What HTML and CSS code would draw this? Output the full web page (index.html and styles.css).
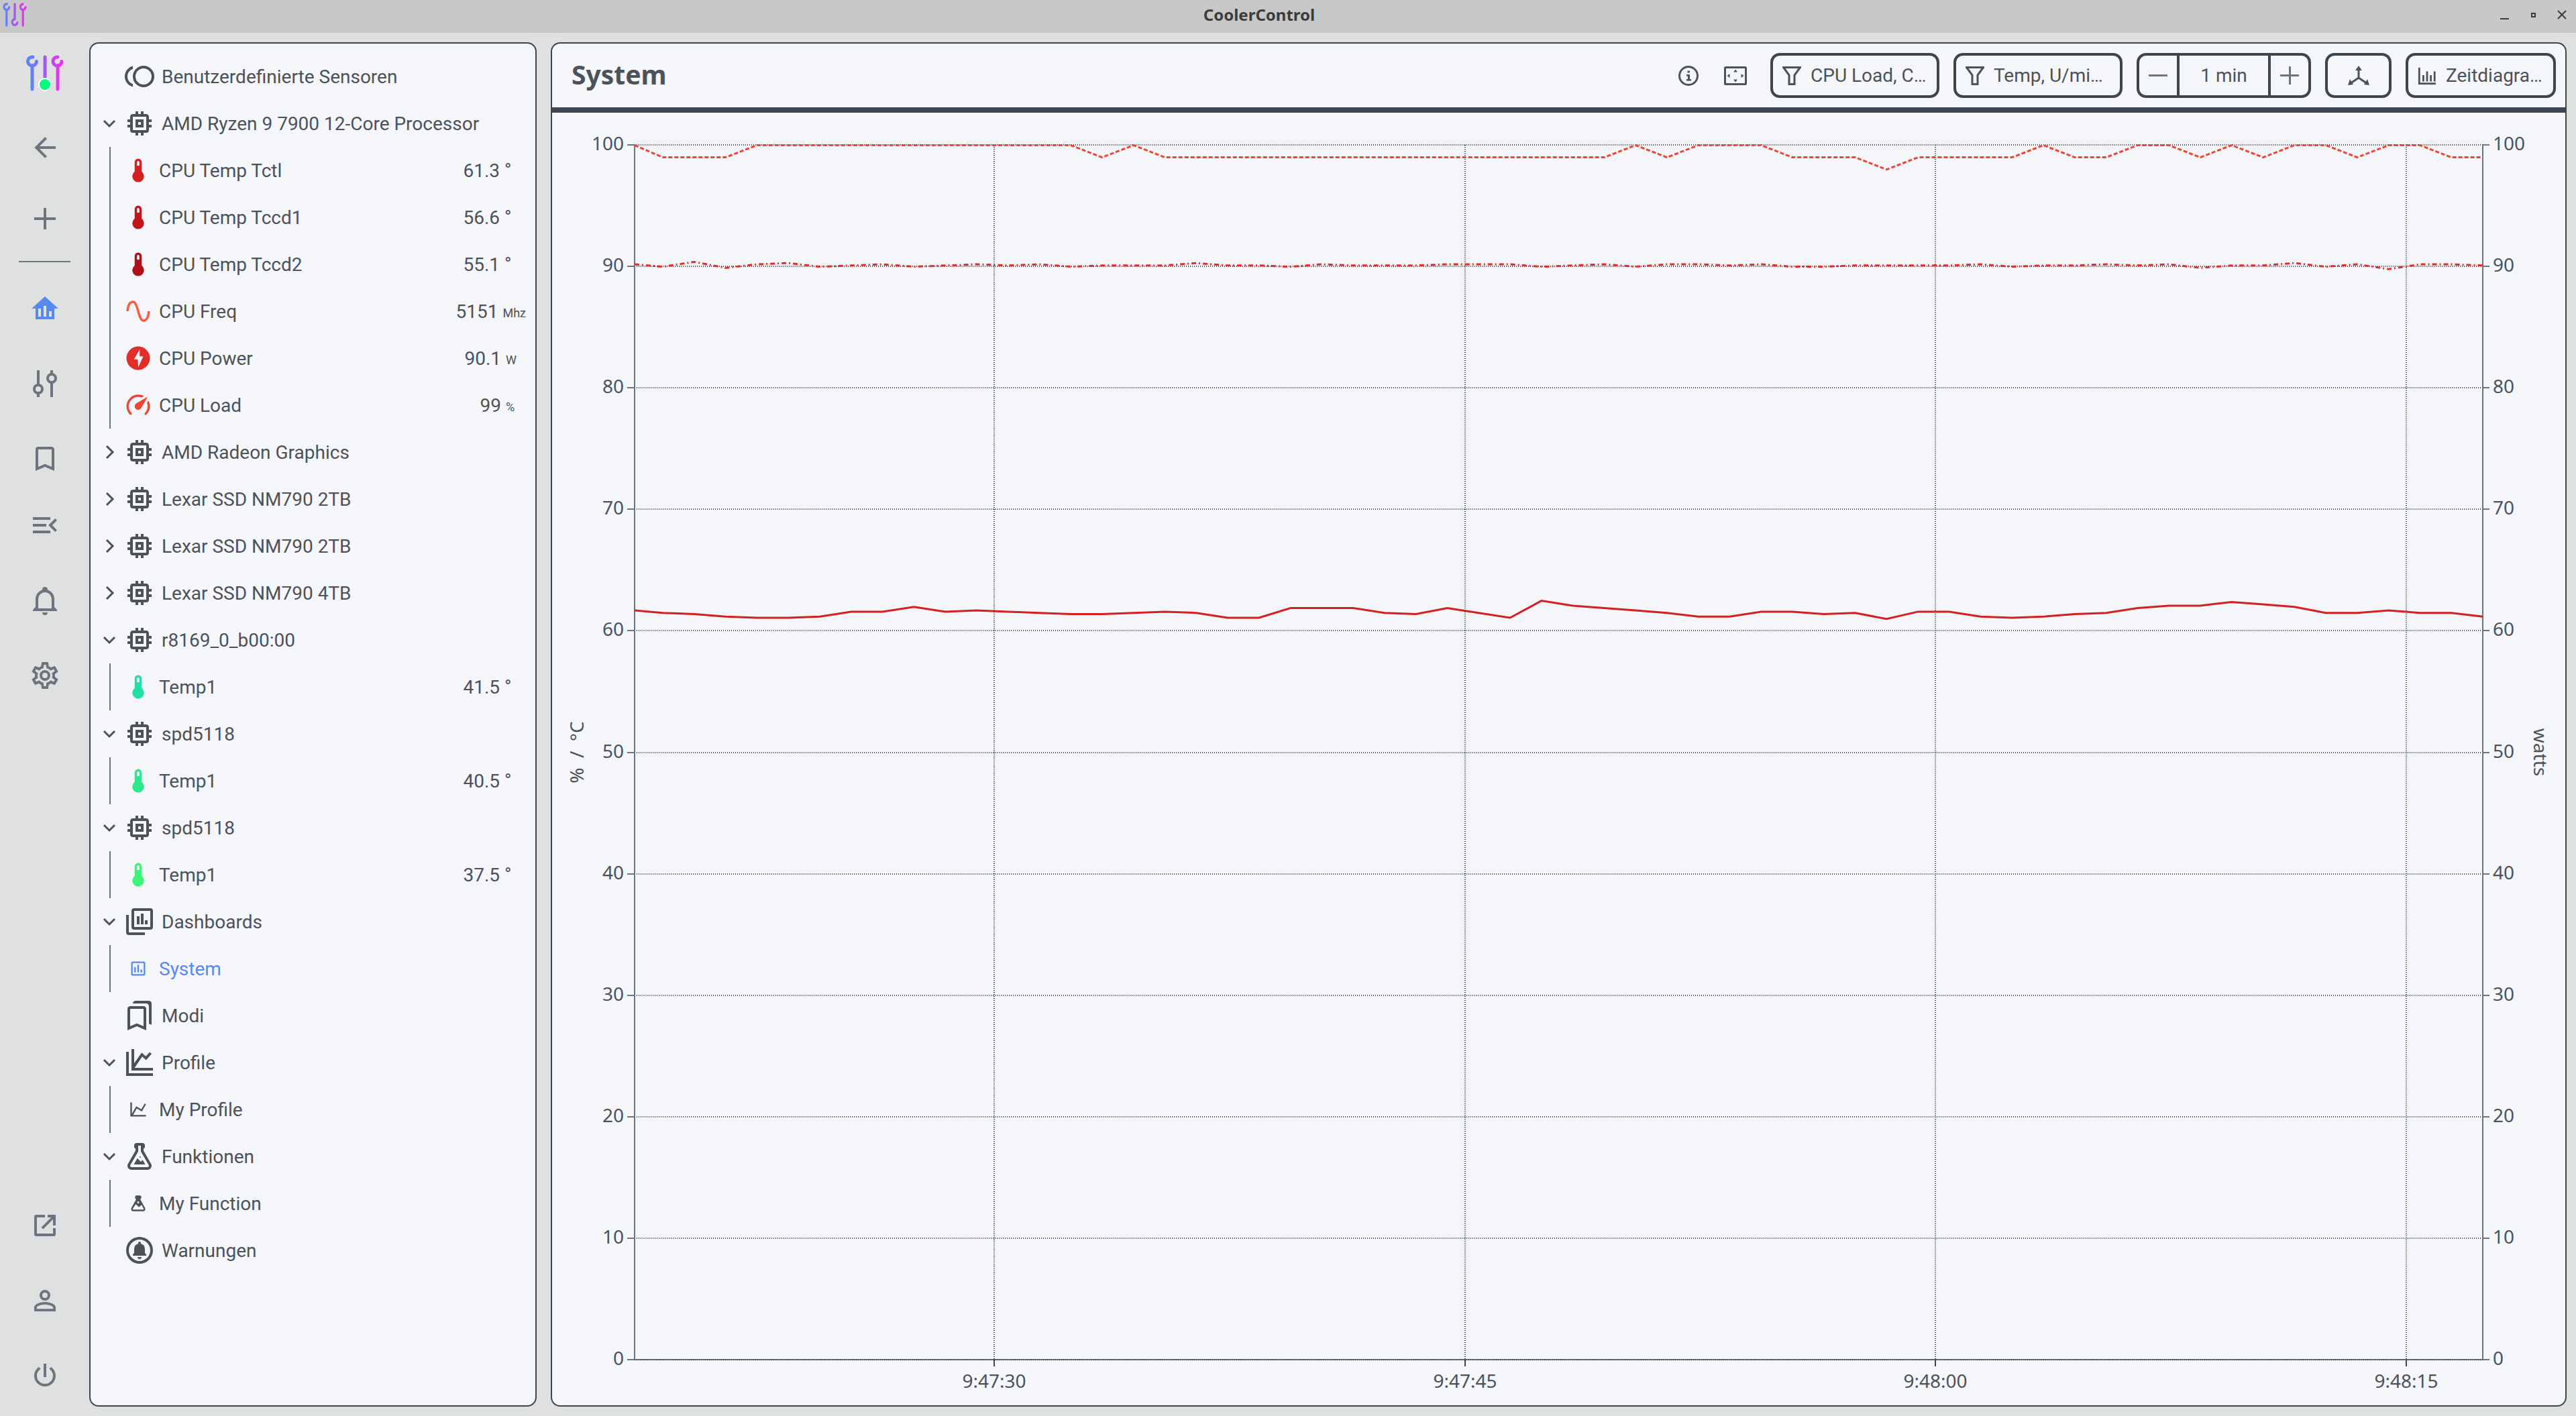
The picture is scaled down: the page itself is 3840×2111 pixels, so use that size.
FILE: index.html
```html
<!DOCTYPE html>
<html lang="de">
<head>
  <meta charset="UTF-8" />
  <meta name="viewport" content="width=device-width, initial-scale=1.0"/>
  <title>CoolerControl</title>
  <link rel="stylesheet" href="styles.css">
</head>
<body>

<!-- Icon set -->
<svg class="icon-defs" aria-hidden="true">
  <defs>
    <linearGradient id="brand" gradientUnits="userSpaceOnUse" x1="0" y1="0" x2="56" y2="0">
      <stop offset="0" stop-color="#568af2"/>
      <stop offset="0.25" stop-color="#6e78ff"/>
      <stop offset="0.5" stop-color="#a557f5"/>
      <stop offset="1" stop-color="#fb28f4"/>
    </linearGradient>
  </defs>
  <symbol id="i-sensors" viewBox="0 0 24 24"><path d="M15,4A8,8 0 0,1 23,12A8,8 0 0,1 15,20A8,8 0 0,1 7,12A8,8 0 0,1 15,4M15,18A6,6 0 0,0 21,12A6,6 0 0,0 15,6A6,6 0 0,0 9,12A6,6 0 0,0 15,18M3,12C3,14.61 4.67,16.83 7,17.65V19.74C3.55,18.85 1,15.73 1,12C1,8.27 3.55,5.15 7,4.26V6.35C4.67,7.17 3,9.39 3,12Z"/></symbol>
  <symbol id="i-chip" viewBox="0 0 24 24"><path d="M17,17H7V7H17M21,11V9H19V7C19,5.89 18.1,5 17,5H15V3H13V5H11V3H9V5H7C5.89,5 5,5.89 5,7V9H3V11H5V13H3V15H5V17A2,2 0 0,0 7,19H9V21H11V19H13V21H15V19H17A2,2 0 0,0 19,17V15H21V13H19V11M13,13H11V11H13M15,9H9V15H15V9Z"/></symbol>
  <symbol id="i-temp" viewBox="0 0 24 24"><path d="M15 13V5A3 3 0 0 0 9 5V13A5 5 0 1 0 15 13M12 4A1 1 0 0 1 13 5V8H11V5A1 1 0 0 1 12 4Z"/></symbol>
  <symbol id="i-freq" viewBox="0 0 24 24"><path d="M16.5,21C13.5,21 12.31,16.76 11.05,12.28C10.14,9.04 9,5 7.5,5C4.11,5 4,11.93 4,12H2C2,11.63 2.06,3 7.5,3C10.5,3 11.71,7.25 12.97,11.74C13.83,14.8 15,19 16.5,19C19.94,19 20.03,12.07 20.03,12H22.03C22.03,12.37 21.97,21 16.5,21Z"/></symbol>
  <symbol id="i-power" viewBox="0 0 24 24"><path fill-rule="evenodd" d="M12 2A10 10 0 0 0 2 12A10 10 0 0 0 12 22A10 10 0 0 0 22 12A10 10 0 0 0 12 2M13.3 4.5L8.4 13H11.6L12.1 19.6L16.3 10.4H13.2Z"/></symbol>
  <symbol id="i-load" viewBox="0 0 24 24"><path d="M12,16A3,3 0 0,1 9,13C9,11.88 9.61,10.9 10.5,10.39L20.21,4.77L14.68,14.35C14.18,15.33 13.17,16 12,16M12,3C13.81,3 15.5,3.5 16.97,4.32L14.87,5.53C14,5.19 13,5 12,5A8,8 0 0,0 4,13C4,15.21 4.89,17.21 6.34,18.65H6.35C6.74,19.04 6.74,19.67 6.35,20.06C5.96,20.45 5.32,20.45 4.93,20.07V20.07C3.12,18.26 2,15.76 2,13A10,10 0 0,1 12,3M22,13C22,15.76 20.88,18.26 19.07,20.07V20.07C18.68,20.45 18.05,20.45 17.66,20.06C17.27,19.67 17.27,19.04 17.66,18.65V18.65C19.11,17.2 20,15.21 20,13C20,12 19.81,11 19.46,10.1L20.67,8C21.5,9.5 22,11.18 22,13Z"/></symbol>
  <symbol id="i-dashboards" viewBox="0 0 24 24"><path d="M20,2H8A2,2 0 0,0 6,4V16A2,2 0 0,0 8,18H20A2,2 0 0,0 22,16V4A2,2 0 0,0 20,2M20,16H8V4H20V16M4,7H2V20A2,2 0 0,0 4,22H16V20H4V7M10,8H12V14H10V8M13,6H15V14H13V6M16,11H18V14H16V11Z"/></symbol>
  <symbol id="i-dashboard" viewBox="0 0 24 24"><path d="M9 17H7V10H9V17M13 17H11V7H13V17M17 17H15V13H17V17M19 19H5V5H19V19.1M19 3H5C3.9 3 3 3.9 3 5V19C3 20.1 3.9 21 5 21H19C20.1 21 21 20.1 21 19V5C21 3.9 20.1 3 19 3Z"/></symbol>
  <symbol id="i-modes" viewBox="0 0 24 24"><path d="M15 7V19.97l-4-1.71-1-.43-1 .43-4 1.71V7h10m4-6H8.99C7.89 1 7 1.9 7 3h10c1.1 0 2 .9 2 2v13l2 1V3c0-1.1-.9-2-2-2m-4 4H5c-1.1 0-2 .9-2 2v16l7-3 7 3V7c0-1.1-.9-2-2-2z"/></symbol>
  <symbol id="i-profiles" viewBox="0 0 24 24"><path d="M2,4H4V20H22V22H2V4M6,2H8V12.6L13.6,4.6L16.7,7.4L19.6,4.2L21,5.5L16.9,10.3L14,7.6L8.3,16H22V18H6V2Z"/></symbol>
  <symbol id="i-profile" viewBox="0 0 24 24"><path d="M16,11.78L20.24,4.45L21.97,5.45L16.74,14.5L10.23,10.75L5.46,19H22V21H2V3H4V17.54L9.5,8L16,11.78Z"/></symbol>
  <symbol id="i-functions" viewBox="0 0 24 24"><path d="M5,19A1,1 0 0,0 6,20H18A1,1 0 0,0 19,19C19,18.79 18.93,18.59 18.82,18.43L13,8.35V4H11V8.35L5.18,18.43C5.07,18.59 5,18.79 5,19M6,22A3,3 0 0,1 3,19C3,18.4 3.18,17.84 3.5,17.37L9,7.81V6A1,1 0 0,1 8,5V4A2,2 0 0,1 10,2H14A2,2 0 0,1 16,4V5A1,1 0 0,1 15,6V7.81L20.5,17.37C20.82,17.84 21,18.4 21,19A3,3 0 0,1 18,22H6M13,16L14.34,14.66L16.27,18H7.73L10.39,13.39L13,16M12.5,12A0.5,0.5 0 0,1 13,12.5A0.5,0.5 0 0,1 12.5,13A0.5,0.5 0 0,1 12,12.5A0.5,0.5 0 0,1 12.5,12Z"/></symbol>
  <symbol id="i-function" viewBox="0 0 24 24"><path fill-rule="evenodd" d="M6,22A3,3 0 0,1 3,19C3,18.4 3.18,17.84 3.5,17.37L9,7.81V6A1,1 0 0,1 8,5V4A2,2 0 0,1 10,2H14A2,2 0 0,1 16,4V5A1,1 0 0,1 15,6V7.81L20.5,17.37C20.82,17.84 21,18.4 21,19A3,3 0 0,1 18,22H6M5,19A1,1 0 0,0 6,20H18A1,1 0 0,0 19,19L18.8,18.4L16.3,14L13,17L9,13L5.2,18.4ZM12,9.5A1.3,1.3 0 0,0 12,12.1A1.3,1.3 0 0,0 12,9.5Z"/></symbol>
  <symbol id="i-alerts" viewBox="0 0 24 24"><path d="M12,2A10,10 0 0,0 2,12A10,10 0 0,0 12,22A10,10 0 0,0 22,12A10,10 0 0,0 12,2M12,20A8,8 0 1,1 20,12A8,8 0 0,1 12,20M12,18.5A1.5,1.5 0 0,0 13.5,17H10.5A1.5,1.5 0 0,0 12,18.5M16,14V11A4,4 0 0,0 13,7.1V6.5A1,1 0 0,0 11,6.5V7.1A4,4 0 0,0 8,11V14L7,15V16H17V15Z"/></symbol>
  <symbol id="i-down" viewBox="0 0 24 24"><path class="line" d="M4 8L12 16L20 8"/></symbol>
  <symbol id="i-right" viewBox="0 0 24 24"><path class="line" d="M8 3L17 12L8 21"/></symbol>
  <symbol id="i-back" viewBox="0 0 24 24"><path d="M20,11V13H8L13.5,18.5L12.08,19.92L4.16,12L12.08,4.08L13.5,5.5L8,11H20Z"/></symbol>
  <symbol id="i-plus" viewBox="0 0 24 24"><path d="M20,13H13V20H11V13H4V11H11V4H13V11H20V13Z"/></symbol>
  <symbol id="i-home" viewBox="0 0 24 24"><path d="M12,3L2,12H5V20H19V12H22L12,3M9,18H7V12H9V18M13,18H11V10H13V18M17,18H15V14H17V18Z"/></symbol>
  <symbol id="i-controls" viewBox="0 0 24 24"><g class="line2"><circle cx="7" cy="16" r="3"/><path d="M7 2V13M7 19V22M17 2V5M17 11V22"/><circle cx="17" cy="8" r="3"/></g></symbol>
  <symbol id="i-bookmark" viewBox="0 0 24 24"><path d="M17,18L12,15.82L7,18V5H17M17,3H7A2,2 0 0,0 5,5V21L12,18L19,21V5C19,3.89 18.1,3 17,3Z"/></symbol>
  <symbol id="i-collapse" viewBox="0 0 24 24"><path d="M21,15.61L19.59,17L14.58,12L19.59,7L21,8.39L17.44,12L21,15.61M3,6H16V8H3V6M3,13V11H13V13H3M3,18V16H16V18H3Z"/></symbol>
  <symbol id="i-bell" viewBox="0 0 24 24"><path d="M10,21H14A2,2 0 0,1 12,23A2,2 0 0,1 10,21M21,19V20H3V19L5,17V11C5,7.9 7.03,5.17 10,4.29C10,4.19 10,4.1 10,4A2,2 0 0,1 12,2A2,2 0 0,1 14,4C14,4.1 14,4.19 14,4.29C16.97,5.17 19,7.9 19,11V17L21,19M17,11A5,5 0 0,0 12,6A5,5 0 0,0 7,11V18H17V11Z"/></symbol>
  <symbol id="i-gear" viewBox="0 0 24 24"><path d="M12,8A4,4 0 0,1 16,12A4,4 0 0,1 12,16A4,4 0 0,1 8,12A4,4 0 0,1 12,8M12,10A2,2 0 0,0 10,12A2,2 0 0,0 12,14A2,2 0 0,0 14,12A2,2 0 0,0 12,10M10,22C9.75,22 9.54,21.82 9.5,21.58L9.13,18.93C8.5,18.68 7.96,18.34 7.44,17.94L4.95,18.95C4.73,19.03 4.46,18.95 4.34,18.73L2.34,15.27C2.21,15.05 2.27,14.78 2.46,14.63L4.57,12.97L4.5,12L4.57,11L2.46,9.37C2.27,9.22 2.21,8.95 2.34,8.73L4.34,5.27C4.46,5.05 4.73,4.96 4.95,5.05L7.44,6.05C7.96,5.66 8.5,5.32 9.13,5.07L9.5,2.42C9.54,2.18 9.75,2 10,2H14C14.25,2 14.46,2.18 14.5,2.42L14.87,5.07C15.5,5.32 16.04,5.66 16.56,6.05L19.05,5.05C19.27,4.96 19.54,5.05 19.66,5.27L21.66,8.73C21.79,8.95 21.73,9.22 21.54,9.37L19.43,11L19.5,12L19.43,13L21.54,14.63C21.73,14.78 21.79,15.05 21.66,15.27L19.66,18.73C19.54,18.95 19.27,19.04 19.05,18.95L16.56,17.95C16.04,18.34 15.5,18.68 14.87,18.93L14.5,21.58C14.46,21.82 14.25,22 14,22H10M11.25,4L10.88,6.61C9.68,6.86 8.62,7.5 7.85,8.39L5.44,7.35L4.69,8.65L6.8,10.2C6.4,11.37 6.4,12.64 6.8,13.8L4.68,15.36L5.43,16.66L7.86,15.62C8.63,16.5 9.68,17.14 10.87,17.38L11.24,20H12.76L13.13,17.39C14.32,17.14 15.37,16.5 16.14,15.62L18.57,16.66L19.32,15.36L17.2,13.81C17.6,12.64 17.6,11.37 17.2,10.2L19.31,8.65L18.56,7.35L16.15,8.39C15.38,7.5 14.32,6.86 13.12,6.62L12.75,4H11.25Z"/></symbol>
  <symbol id="i-external" viewBox="0 0 24 24"><path d="M12,4V6H6V18H18V14H20V18.5A1.5,1.5 0 0,1 18.5,20H5.5A1.5,1.5 0 0,1 4,18.5V5.5A1.5,1.5 0 0,1 5.5,4H12M14,4H20V12H18V7.4L10.7,14.8L9.3,13.4L16.6,6H14V4Z"/></symbol>
  <symbol id="i-person" viewBox="0 0 24 24"><path d="M12,4A4,4 0 0,1 16,8A4,4 0 0,1 12,12A4,4 0 0,1 8,8A4,4 0 0,1 12,4M12,6A2,2 0 0,0 10,8A2,2 0 0,0 12,10A2,2 0 0,0 14,8A2,2 0 0,0 12,6M12,13C14.67,13 20,14.33 20,17V20H4V17C4,14.33 9.33,13 12,13M12,14.9C9.03,14.9 5.9,16.36 5.9,17V18.1H18.1V17C18.1,16.36 14.97,14.9 12,14.9Z"/></symbol>
  <symbol id="i-shutdown" viewBox="0 0 24 24"><path d="M16.56,5.44L15.11,6.89C16.84,7.94 18,9.83 18,12A6,6 0 0,1 12,18A6,6 0 0,1 6,12C6,9.83 7.16,7.94 8.88,6.88L7.44,5.44C5.36,6.88 4,9.28 4,12A8,8 0 0,0 12,20A8,8 0 0,0 20,12C20,9.28 18.64,6.88 16.56,5.44M13,3H11V13H13"/></symbol>
  <symbol id="i-info" viewBox="0 0 32 32"><circle class="thin" cx="16" cy="16" r="13.5"/><path d="M14.5 8.5h3.4v3h-3.4zM13 14h5v7h2v2.6h-7V21h2v-4.4h-2z"/></symbol>
  <symbol id="i-expand" viewBox="0 0 36 32"><rect class="thin" x="2.5" y="3.5" width="31" height="25" rx="1"/><path d="M18 6.500l3 4h-6zM18 25.500l3-4h-6zM5.500 16l4-3v6zM30.500 16l-4-3v6z"/></symbol>
  <symbol id="i-filter" viewBox="0 0 28 30"><path class="thin" d="M1.500 2.500h25L18 14v13.500h-8V14z"/></symbol>
  <symbol id="i-axes" viewBox="0 0 36 32"><path class="thin" d="M18 6v13M18 19L6 27M18 19L30 27"/><path d="M18 1l5 7H13zM2 30l3-9 5 8zM34 30l-3-9-5 8z"/></symbol>
  <symbol id="i-chart" viewBox="0 0 30 30"><path class="thin" d="M2.500 2v25.500H29M9 14v10M15 8v16M21 14v10M27 8v16"/></symbol>
</svg>

<header class="titlebar">
  <svg class="titlebar-logo" viewBox="0 0 56 54" preserveAspectRatio="none" aria-hidden="true">
    <g fill="none" stroke="url(#brand)" stroke-width="5" stroke-linecap="round">
      <path d="M10 3A6 6.500 0 1 0 15 10M9 16V51M47 3A6 6.500 0 1 0 53 10M47 16V51M28.100 3L28 37M28 37A6 6.500 0 1 0 34 44"/>
    </g>
  </svg>
  <h1 class="titlebar-title">CoolerControl</h1>
  <div class="window-controls">
    <button type="button" aria-label="Minimieren"><svg viewBox="0 0 14 14"><path d="M1 12h13v2H1z"/></svg></button>
    <button type="button" aria-label="Maximieren"><svg viewBox="0 0 14 14"><path fill-rule="evenodd" d="M4 4h7v7H4zM6 6v3h3V6z"/></svg></button>
    <button type="button" aria-label="Schließen"><svg viewBox="0 0 14 14"><path class="cross" d="M1 1l12 12M13 1L1 13"/></svg></button>
  </div>
</header>

<div class="workspace">

  <nav class="rail">
    <a href="#" class="rail-logo" aria-label="CoolerControl">
      <svg viewBox="0 0 56 54" aria-hidden="true">
        <g fill="none" stroke="url(#brand)" stroke-width="5" stroke-linecap="round">
          <path d="M10 3A6.500 6.500 0 1 0 15.500 9.500M9 16V51M47 3A6.500 6.500 0 1 0 53 9.500M47.100 16L47 51M28.100 3L28 36"/>
        </g>
        <circle cx="28" cy="44" r="9" fill="#00ff7f" stroke="#fff" stroke-width="2"/>
      </svg>
    </a>
    <div class="rail-group rail-history">
      <button type="button" aria-label="Zurück"><svg><use href="#i-back"/></svg></button>
      <button type="button" aria-label="Hinzufügen"><svg><use href="#i-plus"/></svg></button>
    </div>
    <hr>
    <div class="rail-group">
      <a href="#" class="active" aria-label="Dashboard"><svg><use href="#i-home"/></svg></a>
      <a href="#" aria-label="Steuerung"><svg><use href="#i-controls"/></svg></a>
      <a href="#" aria-label="Modi"><svg><use href="#i-bookmark"/></svg></a>
    </div>
    <div class="rail-group rail-tools">
      <button type="button" aria-label="Menü einklappen"><svg><use href="#i-collapse"/></svg></button>
      <button type="button" aria-label="Warnungen"><svg><use href="#i-bell"/></svg></button>
      <button type="button" aria-label="Einstellungen"><svg><use href="#i-gear"/></svg></button>
    </div>
    <div class="rail-group rail-bottom">
      <a href="#" aria-label="Im Browser öffnen"><svg><use href="#i-external"/></svg></a>
      <button type="button" aria-label="Anmeldung"><svg><use href="#i-person"/></svg></button>
      <button type="button" aria-label="Beenden"><svg><use href="#i-shutdown"/></svg></button>
    </div>
  </nav>

  <aside class="panel tree">
    <a href="#" class="node"><span class="chevron"></span><svg><use href="#i-sensors"/></svg>Benutzerdefinierte Sensoren</a>

    <button type="button" class="node"><svg class="chevron"><use href="#i-down"/></svg><svg><use href="#i-chip"/></svg>AMD Ryzen 9 7900 12-Core Processor</button>
    <div class="children">
      <a href="#" class="leaf"><svg class="tctl"><use href="#i-temp"/></svg><span class="name">CPU Temp Tctl</span><span class="value">61.3</span><span class="unit deg">°</span></a>
      <a href="#" class="leaf"><svg class="tccd1"><use href="#i-temp"/></svg><span class="name">CPU Temp Tccd1</span><span class="value">56.6</span><span class="unit deg">°</span></a>
      <a href="#" class="leaf"><svg class="tccd2"><use href="#i-temp"/></svg><span class="name">CPU Temp Tccd2</span><span class="value">55.1</span><span class="unit deg">°</span></a>
      <a href="#" class="leaf"><svg class="freq"><use href="#i-freq"/></svg><span class="name">CPU Freq</span><span class="value">5151</span><span class="unit">Mhz</span></a>
      <a href="#" class="leaf"><svg class="power"><use href="#i-power"/></svg><span class="name">CPU Power</span><span class="value">90.1</span><span class="unit">W</span></a>
      <a href="#" class="leaf"><svg class="load"><use href="#i-load"/></svg><span class="name">CPU Load</span><span class="value">99</span><span class="unit">%</span></a>
    </div>

    <button type="button" class="node"><svg class="chevron"><use href="#i-right"/></svg><svg><use href="#i-chip"/></svg>AMD Radeon Graphics</button>
    <button type="button" class="node"><svg class="chevron"><use href="#i-right"/></svg><svg><use href="#i-chip"/></svg>Lexar SSD NM790 2TB</button>
    <button type="button" class="node"><svg class="chevron"><use href="#i-right"/></svg><svg><use href="#i-chip"/></svg>Lexar SSD NM790 2TB</button>
    <button type="button" class="node"><svg class="chevron"><use href="#i-right"/></svg><svg><use href="#i-chip"/></svg>Lexar SSD NM790 4TB</button>

    <button type="button" class="node"><svg class="chevron"><use href="#i-down"/></svg><svg><use href="#i-chip"/></svg>r8169_0_b00:00</button>
    <div class="children">
      <a href="#" class="leaf"><svg class="nic"><use href="#i-temp"/></svg><span class="name">Temp1</span><span class="value">41.5</span><span class="unit deg">°</span></a>
    </div>

    <button type="button" class="node"><svg class="chevron"><use href="#i-down"/></svg><svg><use href="#i-chip"/></svg>spd5118</button>
    <div class="children">
      <a href="#" class="leaf"><svg class="ram1"><use href="#i-temp"/></svg><span class="name">Temp1</span><span class="value">40.5</span><span class="unit deg">°</span></a>
    </div>

    <button type="button" class="node"><svg class="chevron"><use href="#i-down"/></svg><svg><use href="#i-chip"/></svg>spd5118</button>
    <div class="children">
      <a href="#" class="leaf"><svg class="ram2"><use href="#i-temp"/></svg><span class="name">Temp1</span><span class="value">37.5</span><span class="unit deg">°</span></a>
    </div>

    <button type="button" class="node"><svg class="chevron"><use href="#i-down"/></svg><svg><use href="#i-dashboards"/></svg>Dashboards</button>
    <div class="children">
      <a href="#" class="leaf active"><svg class="small"><use href="#i-dashboard"/></svg><span class="name">System</span></a>
    </div>

    <a href="#" class="node"><span class="chevron"></span><svg><use href="#i-modes"/></svg>Modi</a>

    <button type="button" class="node"><svg class="chevron"><use href="#i-down"/></svg><svg><use href="#i-profiles"/></svg>Profile</button>
    <div class="children">
      <a href="#" class="leaf"><svg class="small"><use href="#i-profile"/></svg><span class="name">My Profile</span></a>
    </div>

    <button type="button" class="node"><svg class="chevron"><use href="#i-down"/></svg><svg><use href="#i-functions"/></svg>Funktionen</button>
    <div class="children">
      <a href="#" class="leaf"><svg class="small"><use href="#i-function"/></svg><span class="name">My Function</span></a>
    </div>

    <a href="#" class="node"><span class="chevron"></span><svg><use href="#i-alerts"/></svg>Warnungen</a>
  </aside>

  <main class="panel dashboard">
    <div class="toolbar">
      <h2>System</h2>
      <div class="toolbar-icons">
        <button type="button" aria-label="Info"><svg class="info"><use href="#i-info"/></svg></button>
        <button type="button" aria-label="Vollbild"><svg class="expand"><use href="#i-expand"/></svg></button>
      </div>
      <button type="button" class="btn filter-btn"><svg><use href="#i-filter"/></svg>CPU Load, C…</button>
      <button type="button" class="btn filter-btn"><svg><use href="#i-filter"/></svg>Temp, U/mi…</button>
      <div class="stepper">
        <button type="button" aria-label="Weniger"><svg viewBox="0 0 28 28"><path d="M0 12h28v3H0z"/></svg></button>
        <output>1 min</output>
        <button type="button" aria-label="Mehr"><svg viewBox="0 0 28 28"><path d="M0 12h13V0h3v12h12v3H16v12h-3V15H0z"/></svg></button>
      </div>
      <button type="button" class="btn axes-btn" aria-label="Achsen"><svg class="expand"><use href="#i-axes"/></svg></button>
      <button type="button" class="btn type-btn"><svg><use href="#i-chart"/></svg>Zeitdiagra…</button>
    </div>
    <div class="chart" id="chart"></div>
  </main>

</div>

<script>
  const chart = document.getElementById('chart');
  const margin = { top: 48, right: 123, bottom: 68, left: 123 };

  // one sample per second, the newest one sits on the right edge
  const temp = [61.7, 61.5, 61.4, 61.2, 61.1, 61.1, 61.2, 61.6, 61.6, 62, 61.6, 61.7, 61.6, 61.5, 61.4, 61.4, 61.5, 61.6, 61.5, 61.1,
    61.1, 61.9, 61.9, 61.9, 61.5, 61.4, 61.9, 61.5, 61.1, 62.5, 62.1, 61.9, 61.7, 61.5, 61.2, 61.2, 61.6, 61.6, 61.4, 61.5,
    61, 61.6, 61.6, 61.2, 61.1, 61.2, 61.4, 61.5, 61.9, 62.1, 62.1, 62.4, 62.2, 62, 61.5, 61.5, 61.7, 61.5, 61.5, 61.2];
  const load = [100, 99, 99, 99, 100, 100, 100, 100, 100, 100, 100, 100, 100, 100, 100, 99, 100, 99, 99, 99,
    99, 99, 99, 99, 99, 99, 99, 99, 99, 99, 99, 99, 100, 99, 100, 100, 100, 99, 99, 99,
    98, 99, 99, 99, 99, 100, 99, 99, 100, 100, 99, 100, 99, 100, 100, 99, 100, 100, 99, 99];
  const power = [90.2, 90, 90.4, 89.9, 90.2, 90.3, 90, 90.1, 90.2, 90, 90.1, 90.2, 90.1, 90.2, 90, 90.1, 90.1, 90.1, 90.3, 90.1,
    90.1, 90, 90.2, 90.1, 90.1, 90.1, 90.2, 90.2, 90.2, 90, 90.1, 90.2, 90, 90.2, 90.2, 90.1, 90.2, 90, 90, 90.1,
    90.1, 90.1, 90.1, 90.2, 90, 90.1, 90.1, 90.2, 90.1, 90.2, 89.9, 90.1, 90.1, 90.3, 90, 90.2, 89.8, 90.2, 90.2, 90.1];
  const seconds = 58.9;
  const times = [
    { label: '9:47:30', at: 11.46 },
    { label: '9:47:45', at: 26.46 },
    { label: '9:48:00', at: 41.46 },
    { label: '9:48:15', at: 56.46 }
  ];

  function draw() {
    const w = chart.clientWidth;
    const h = chart.clientHeight;
    const left = margin.left;
    const right = w - margin.right;
    const top = margin.top;
    const bottom = h - margin.bottom;
    const x = s => left + (right - left) * s / seconds;
    const y = v => bottom - (bottom - top) * v / 100;
    let out = '';

    for (let v = 0; v <= 100; v += 10) {
      const py = Math.round(y(v));
      out += `<path class="tick" d="M${left - 11} ${py}H${left}M${right} ${py}H${right + 10}"/>`;
      if (v === 0) out += `<path class="tick" d="M${left} ${py}H${right}"/>`;
      out += `<path class="grid" d="M${left} ${py}H${right}"/>`;
      out += `<text class="end" x="${left - 16}" y="${py + 8}">${v}</text>`;
      out += `<text x="${right + 15}" y="${py + 8}">${v}</text>`;
    }

    times.forEach(t => {
      const px = Math.round(x(t.at));
      out += `<path class="grid" d="M${px} ${top}V${bottom}"/>`;
      out += `<path class="tick dark" d="M${px} ${bottom}V${bottom + 10}"/>`;
      out += `<text class="middle" x="${px}" y="${bottom + 42}">${t.label}</text>`;
    });

    out += `<path class="tick" d="M${left} ${top}V${bottom}M${right} ${top}V${bottom}"/>`;

    const line = (data, name) => {
      const n = data.length - 1;
      const pts = data.map((v, i) => `${Math.max(left, x(seconds - n + i)).toFixed(1)},${(y(v) + 0.5).toFixed(1)}`);
      return `<polyline class="series ${name}" points="${pts.join(' ')}"/>`;
    };
    out += line(load, 'load') + line(power, 'power') + line(temp, 'temp');

    const mid = (top + bottom) / 2;
    out += `<text class="middle" transform="translate(47 ${mid}) rotate(-90)">%  /  °C</text>`;
    out += `<text class="middle" transform="translate(${w - 47} ${mid}) rotate(90)">watts</text>`;

    chart.innerHTML = `<svg width="${w}" height="${h}" role="img" aria-label="System">${out}</svg>`;
  }

  draw();
  window.addEventListener('resize', draw);
</script>

</body>
</html>
```
FILE: styles.css
```css
* {
  box-sizing: border-box;
}

body {
  margin: 0;
  min-height: 100vh;
  display: flex;
  flex-direction: column;
  background: #dfe1e0;
  color: #4c5258;
  font-family: Roboto, sans-serif;
  font-size: 28px;
}

button {
  font: inherit;
  color: inherit;
  background: none;
  border: none;
  padding: 0;
  cursor: pointer;
}

a {
  color: inherit;
  text-decoration: none;
}

svg {
  fill: currentColor;
  display: block;
}

.icon-defs {
  position: absolute;
  width: 0;
  height: 0;
}

.line,
.line2,
.thin {
  fill: none;
  stroke: currentColor;
  stroke-width: 3;
}

.line2 {
  stroke-width: 2;
}

/* Title bar */
.titlebar {
  display: flex;
  align-items: center;
  height: 49px;
  padding: 0 14px 6px 4px;
  background: #c8c8c8;
  color: #3c3c3c;
}

.titlebar-logo {
  width: 36px;
  height: 36px;
}

.titlebar-title {
  flex: 1;
  margin: 0;
  text-align: center;
  font: bold 24px "Noto Sans", sans-serif;
}

.window-controls {
  display: flex;
  gap: 29px;
  margin-left: 12px;
}

.window-controls svg {
  width: 14px;
  height: 14px;
}

.cross {
  stroke: currentColor;
  stroke-width: 2;
}

.workspace {
  flex: 1;
  display: flex;
  padding: 14px 14px 14px 0;
}

/* Icon rail */
.rail {
  width: 133px;
  flex: none;
  display: flex;
  flex-direction: column;
  align-items: center;
  padding-top: 19px;
  color: #6c757f;
}

.rail-logo svg {
  width: 56px;
  height: 54px;
}

.rail-group {
  display: flex;
  flex-direction: column;
  gap: 64px;
}

.rail-history {
  gap: 58px;
  margin-top: 60px;
}

.rail hr {
  width: 77px;
  height: 2px;
  margin: 39px 0 45px;
  border: none;
  background: #6c757f;
}

.rail-tools {
  margin-top: 51px;
}

.rail-bottom {
  margin-top: auto;
  margin-bottom: 22px;
}

.rail-group svg {
  width: 48px;
  height: 48px;
}

.rail .active,
.tree .active {
  color: #568af2;
}

/* Panels */
.panel {
  background: #f4f6fa;
  border: 2px solid #3d464f;
  border-radius: 14px;
}

.tree {
  width: 667px;
  flex: none;
  margin-right: 21px;
  padding: 14px 0;
}

.node {
  display: flex;
  align-items: center;
  gap: 9px;
  width: 100%;
  height: 70px;
  padding-left: 16px;
  text-align: left;
}

.node svg {
  width: 48px;
  height: 48px;
}

.node .chevron {
  width: 24px;
  height: 24px;
}

.children {
  margin-left: 28px;
  border-left: 2px solid #6c757f;
}

.leaf {
  display: flex;
  align-items: center;
  height: 70px;
  padding: 0 14px 0 20px;
}

.leaf svg {
  width: 42px;
  height: 42px;
  margin-right: 10px;
}

.leaf svg.small {
  width: 28px;
  height: 28px;
  margin: 0 17px 0 7px;
}

.name {
  flex: 1;
}

.unit {
  min-width: 30px;
  margin-left: 7px;
  font-size: 18px;
  line-height: 28px;
  padding-top: 5px;
}

.unit.deg {
  min-width: 32px;
  font-size: 28px;
  padding-top: 0;
}

.tctl { color: #d42020; }
.tccd1 { color: #c4161a; }
.tccd2 { color: #ae1018; }
.leaf .freq { color: #ff5a40; }
.leaf .power { color: #e32d28; }
.leaf .load { color: #f04532; }
.nic { color: #20e0a4; }
.ram1 { color: #2aea8c; }
.ram2 { color: #3cf577; }

/* Dashboard */
.dashboard {
  flex: 1;
  min-width: 0;
  display: flex;
  flex-direction: column;
}

.toolbar {
  display: flex;
  align-items: center;
  gap: 21px;
  height: 103px;
  padding: 0 14px 0 29px;
  border-bottom: 8px solid #3d464f;
}

.toolbar h2 {
  flex: 1;
  margin: 0;
  padding-bottom: 4px;
  font: bold 39px "Noto Sans", sans-serif;
}

.toolbar-icons {
  display: flex;
  gap: 7px;
}

.toolbar-icons button {
  width: 63px;
  height: 49px;
  display: flex;
  align-items: center;
  justify-content: center;
}

.btn,
.stepper {
  display: flex;
  align-items: center;
  height: 67px;
  border: 4px solid #3d464f;
  border-radius: 14px;
}

.btn {
  gap: 14px;
  padding: 0 14px;
}

.btn svg {
  width: 28px;
  height: 30px;
}

.info {
  width: 32px;
  height: 32px;
}

svg.expand {
  width: 36px;
  height: 32px;
}

.filter-btn {
  width: 252px;
}

.axes-btn {
  width: 99px;
  justify-content: center;
}

.type-btn {
  width: 224px;
}

.stepper {
  width: 260px;
}

.stepper button {
  flex: 1;
  display: flex;
  justify-content: center;
  color: #6c757f;
}

.stepper svg {
  width: 28px;
  height: 28px;
}

.stepper output {
  width: 140px;
  height: 100%;
  display: flex;
  align-items: center;
  justify-content: center;
  border: solid #3d464f;
  border-width: 0 4px;
}

/* Chart */
.chart {
  flex: 1;
  min-height: 400px;
  overflow: hidden;
}

.chart text {
  font: 28px "Noto Sans", sans-serif;
  white-space: pre;
}

.chart .end {
  text-anchor: end;
}

.chart .middle {
  text-anchor: middle;
}

.grid,
.tick {
  fill: none;
  stroke-width: 2;
  stroke: #6c757f;
}

.grid,
.dark {
  stroke: #3d464f;
}

.grid {
  stroke-dasharray: 1 2;
}

.series {
  fill: none;
  stroke-width: 3;
}

.series.temp { stroke: #d42020; }

.series.load {
  stroke: #f04532;
  stroke-dasharray: 6 3;
}

.series.power {
  stroke: #e32d28;
  stroke-dasharray: 7 4 2 4;
}
```
